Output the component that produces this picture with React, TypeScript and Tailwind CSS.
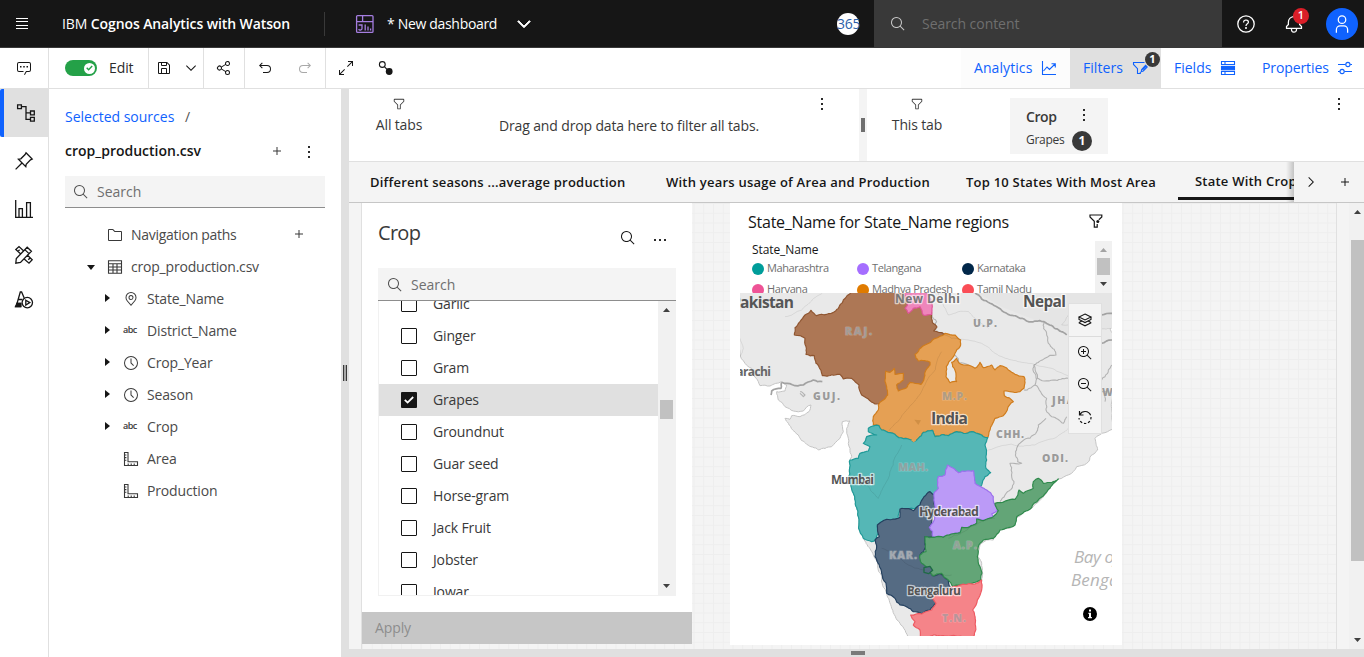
import type { ReactNode } from "react";

type Pt = [number, number];

/* ---------- icons ---------- */

function Glyph({ d, size = 16, className = "", children }: { d?: string; size?: number; className?: string; children?: ReactNode }) {
  return (
    <svg width={size} height={size} viewBox="0 0 32 32" fill="currentColor" className={"shrink-0 " + className}>
      {d ? <path d={d} /> : null}
      {children}
    </svg>
  );
}

const P = {
  search:
    "M29,27.5859l-7.5521-7.5521a11.0177,11.0177,0,1,0-1.4141,1.4141L27.5859,29ZM4,13a9,9,0,1,1,9,9A9.01,9.01,0,0,1,4,13Z",
  chat: "M17.74,30,16,29l4-7h6a2,2,0,0,0,2-2V8a2,2,0,0,0-2-2H6A2,2,0,0,0,4,8V20a2,2,0,0,0,2,2h9v2H6a4,4,0,0,1-4-4V8A4,4,0,0,1,6,4H26a4,4,0,0,1,4,4V20a4,4,0,0,1-4,4H21.16Z",
  save: "M27.71,9.29l-5-5A1,1,0,0,0,22,4H6A2,2,0,0,0,4,6V26a2,2,0,0,0,2,2H26a2,2,0,0,0,2-2V10A1,1,0,0,0,27.71,9.29ZM12,6h8v4H12Zm8,20H12V18h8Zm2,0V18a2,2,0,0,0-2-2H12a2,2,0,0,0-2,2v8H6V6h4v4a2,2,0,0,0,2,2h8a2,2,0,0,0,2-2V6.41l4,4V26Z",
  share:
    "M23,20a5,5,0,0,0-3.89,1.89L11.8,17.32a4.46,4.46,0,0,0,0-2.64l7.31-4.57A5,5,0,1,0,18,7a4.79,4.79,0,0,0,.2,1.32l-7.31,4.57a5,5,0,1,0,0,6.22l7.31,4.57A4.79,4.79,0,0,0,18,25a5,5,0,1,0,5-5ZM23,4a3,3,0,1,1-3,3A3,3,0,0,1,23,4ZM7,19a3,3,0,1,1,3-3A3,3,0,0,1,7,19Zm16,9a3,3,0,1,1,3-3A3,3,0,0,1,23,28Z",
  undo: "M20,10H7.8149l3.5874-3.5859L10,5,4,11,10,17l1.4023-1.4146L7.8179,12H20a6,6,0,0,1,0,12H12v2h8a8,8,0,0,0,0-16Z",
  redo: "M12,10H24.1851L20.5977,6.4141,22,5,28,11,22,17l-1.4023-1.4146L24.1821,12H12a6,6,0,0,0,0,12h8v2H12a8,8,0,0,1,0-16Z",
  expand:
    "M20,2v2h6.586L18,12.582,19.414,14,28,5.414V12h2V2ZM14,19.416,12.592,18,4,26.586V20H2v10h10v-2H5.414Z",
  filter:
    "M18,28H14a2,2,0,0,1-2-2V18.41L4.59,11A2,2,0,0,1,4,9.59V6A2,2,0,0,1,6,4H26a2,2,0,0,1,2,2V9.59A2,2,0,0,1,27.41,11L20,18.41V26A2,2,0,0,1,18,28ZM6,6V9.59l8,8V26h4V17.59l8-8V6Z",
  user: "M16,4a5,5,0,1,1-5,5,5,5,0,0,1,5-5m0-2a7,7,0,1,0,7,7A7,7,0,0,0,16,2ZM26,30H24V25a5,5,0,0,0-5-5H13a5,5,0,0,0-5,5v5H6V25a7,7,0,0,1,7-7h6a7,7,0,0,1,7,7Z",
  bell: "M28.7071,19.293,26,16.5859V13a10.0136,10.0136,0,0,0-9-9.9492V1H15V3.0508A10.0136,10.0136,0,0,0,6,13v3.5859L3.2929,19.293A1,1,0,0,0,3,20v3a1,1,0,0,0,1,1h7v.7768a5.152,5.152,0,0,0,4.5,5.1987A5.0057,5.0057,0,0,0,21,25V24h7a1,1,0,0,0,1-1V20A1,1,0,0,0,28.7071,19.293ZM19,25a3,3,0,0,1-6,0V24h6Zm8-3H5V20.4141L7.707,17.707A1,1,0,0,0,8,17V13a8,8,0,0,1,16,0v4a1,1,0,0,0,.293.707L27,20.4141Z",
  pin: "M16,18a5,5,0,1,1,5-5A5.0057,5.0057,0,0,1,16,18Zm0-8a3,3,0,1,0,3,3A3.0033,3.0033,0,0,0,16,10ZM16,30,7.5645,20.0513c-.0479-.0571-.3482-.4515-.3482-.4515A10.8888,10.8888,0,0,1,5,13a11,11,0,0,1,22,0,10.8844,10.8844,0,0,1-2.2148,6.5973l-.0015.0025s-.3.3944-.3447.4474ZM8.8125,18.395c.001.0007.2334.3082.2866.3744L16,26.9079l6.91-8.15c.0439-.0552.2783-.3649.2788-.3657A8.901,8.901,0,0,0,25,13,9,9,0,1,0,7,13a8.9054,8.9054,0,0,0,1.8125,5.395Z",
  clock: "M16,30A14,14,0,1,1,30,16,14,14,0,0,1,16,30ZM16,4A12,12,0,1,0,28,16,12,12,0,0,0,16,4ZM20.59,22,15,16.41V7h2v8.58l5,5.01Z",
  folder:
    "M11.17,6l3.42,3.41.58.59H28V26H4V6h7.17m0-2H4A2,2,0,0,0,2,6V26a2,2,0,0,0,2,2H28a2,2,0,0,0,2-2V10a2,2,0,0,0-2-2H16L12.59,4.59A2,2,0,0,0,11.17,4Z",
  plus: "M17,15V8H15v7H8v2h7v7h2V17h7V15Z",
  chevDown: "M16,22,6,12l1.4-1.4L16,19.2l8.6-8.6L26,12Z",
  chevRight: "M22,16,12,26l-1.4-1.4L19.2,16,10.6,7.4,12,6Z",
};

function Dots({ vertical = true }: { vertical?: boolean }) {
  return (
    <span className={vertical ? "flex flex-col gap-[3px]" : "flex gap-[3px]"}>
      <i className="block size-[2px] bg-[#2b2b2b]" />
      <i className="block size-[2px] bg-[#2b2b2b]" />
      <i className="block size-[2px] bg-[#2b2b2b]" />
    </span>
  );
}

function Tri({ dir, className = "text-[#404040]" }: { dir: "up" | "down"; className?: string }) {
  return (
    <svg width="7" height="4" viewBox="0 0 7 4" fill="currentColor" className={className}>
      <path d={dir === "up" ? "M0 4L3.5 0L7 4Z" : "M0 0H7L3.5 4Z"} />
    </svg>
  );
}

/* ---------- header ---------- */

function Header() {
  return (
    <header className="flex h-12 shrink-0 items-center border-b border-[#393939] bg-[#161616] text-white">
      <div className="ml-4 flex w-[46px] flex-col gap-[2.4px]">
        <i className="block h-px w-3 bg-white" />
        <i className="block h-px w-3 bg-white" />
        <i className="block h-px w-3 bg-white" />
        <i className="block h-px w-3 bg-white" />
      </div>
      <div className="w-[262px] text-[14px] font-semibold tracking-[-0.1px]">
        <span className="font-normal">IBM</span> Cognos Analytics with Watson
      </div>
      <div className="h-6 w-px bg-[#393939]" />
      <svg width="20" height="20" viewBox="0 0 20 20" fill="none" stroke="#a57ee0" strokeWidth="1.3" className="ml-[30px]">
        <rect x="1.6" y="1.6" width="16.4" height="16.8" rx="1" />
        <path d="M1.6 7.6H18M7.6 1.6V7.6M3.6 11H7v2.6a1.9 1.9 0 0 1-3.4 1.6M10.2 16.6V10.4M13 16.6V12.4M15.6 16.6V14.6" />
      </svg>
      <span className="ml-3 w-[111px] text-[14px] font-medium tracking-[-0.32px]">* New dashboard</span>
      <Glyph d={P.chevDown} size={20} className="ml-4 stroke-white stroke-[1.5]" />
      <div className="ml-[303px] flex size-[22px] items-center rounded-full bg-white text-[14px] text-[#2b5fa8]">
        <span className="tracking-[-0.2px]">365</span>
      </div>
      <div className="ml-[15px] flex h-[47px] w-[348px] items-center bg-[#393939] pl-4">
        <Glyph d={P.search} size={16} className="text-[#c6c6c6]" />
        <span className="ml-4 text-[14px] tracking-[-0.05px] text-[#6f6f6f]">Search content</span>
      </div>
      <svg width="20" height="20" viewBox="0 0 20 20" fill="none" stroke="white" strokeWidth="1.3" className="ml-[14px]">
        <circle cx="10" cy="10" r="8.2" />
        <path d="M7.6 8.4V8A2 2 0 0 1 9.4 6.2H10.4A2 2 0 0 1 12.4 8.2C12.4 10 10 9.6 10 12" />
        <circle cx="10" cy="14" r="0.4" fill="white" />
      </svg>
      <div className="relative ml-[28px] flex size-5 items-center">
        <Glyph d={P.bell} size={20} />
        <span className="absolute -top-[6px] left-[9px] flex size-4 items-center justify-center rounded-full bg-[#da1e28] text-[11px] font-semibold">
          1
        </span>
      </div>
      <div className="ml-[22px] flex size-8 items-center justify-center rounded-full bg-[#0f62fe]">
        <Glyph d={P.user} size={20} />
      </div>
    </header>
  );
}

/* ---------- toolbar ---------- */

function Toolbar() {
  const sep = "h-full border-r border-[#e0e0e0] flex items-center";
  return (
    <div className="flex h-[41px] shrink-0 items-center border-b border-[#e0e0e0] text-[#161616]">
      <div className={sep + " w-[49px] justify-center"}>
        <Glyph d={P.chat}>
          <path d="M8 12h3v3H8zM14.5 12h3v3h-3zM21 12h3v3h-3z" />
        </Glyph>
      </div>
      <div className={sep + " w-[100px] pl-4"}>
        <span className="flex h-4 w-8 items-center justify-end rounded-full bg-[#24a148] pr-[2px]">
          <span className="flex size-[11px] items-center justify-center rounded-full bg-white">
            <svg width="7" height="6" viewBox="0 0 7 6" fill="none" stroke="#24a148" strokeWidth="1.4">
              <path d="M0.7 2.8L2.6 4.7L6.2 0.9" />
            </svg>
          </span>
        </span>
        <span className="ml-[12px] pb-[1px] text-[14px] tracking-[-0.1px] text-[#2b2b2b]">Edit</span>
      </div>
      <div className={sep + " w-[55px] pl-[7px]"}>
        <Glyph d={P.save} />
        <Glyph d={P.chevDown} className="ml-[11px]" />
      </div>
      <div className={sep + " w-[41px] justify-center"}>
        <Glyph d={P.share} />
      </div>
      <div className={sep + " w-[81px] gap-6 pl-[12px]"}>
        <Glyph d={P.undo} />
        <Glyph d={P.redo} className="text-[#a8a8a8]" />
      </div>
      <Glyph d={P.expand} className="ml-[12px]" />
      <svg width="16" height="16" viewBox="0 0 16 16" className="ml-6">
        <circle cx="4.3" cy="4.5" r="2.9" fill="none" stroke="#161616" strokeWidth="1.1" />
        <circle cx="11.2" cy="11.5" r="3.4" fill="#161616" />
        <path d="M6.4 6.6L9 9.4" stroke="#161616" strokeWidth="1.1" />
      </svg>
      <div className="flex-1" />
      <div className="flex h-full w-[109px] items-center bg-[#fcfcfc] pl-[13px] text-[14px] text-[#0f62fe]">
        <span className="w-[67px] pb-[1px] tracking-[0.08px]">Analytics</span>
        <svg width="16" height="16" viewBox="0 0 16 16" fill="none" stroke="currentColor" strokeWidth="1.1">
          <path d="M1.5 1V14.5H15M2.5 11L6 7L8.5 9.5L14 4M10.5 3.7H14.3V7.5" />
        </svg>
      </div>
      <div className="relative flex h-full w-[91px] items-center bg-[#e0e0e0] pl-[13px] text-[14px] text-[#0f62fe]">
        <span className="w-[49px] pb-[1px] tracking-[0.05px]">Filters</span>
        <svg width="16" height="16" viewBox="0 0 16 16" fill="none" stroke="currentColor" strokeWidth="1.1">
          <path d="M12.5 2.5H1.5V4.5L5.5 8.7V13.5H8.3V12" />
          <path d="M9.2 11.6L9.7 9.4L13.6 5.4L15.2 7L11.3 11Z" />
          <path d="M10.4 9.8L14.2 6" strokeWidth="1.6" />
        </svg>
        <span className="absolute left-[75px] top-1 flex size-[15px] items-center justify-center rounded-full bg-[#393939] text-[11px] font-bold text-white">
          1
        </span>
      </div>
      <div className="flex h-full w-[88px] items-center pl-[13px] text-[14px] text-[#0f62fe]">
        <span className="w-[46px] pb-[1px]">Fields</span>
        <svg width="16" height="16" viewBox="0 0 16 16" fill="none" stroke="currentColor" strokeWidth="1.1">
          <path d="M1.5 1.5H14.5V4.5H1.5ZM5 1.5V4.5M1.5 11.5H14.5V14.5H1.5ZM5 11.5V14.5" />
          <rect x="1.5" y="6.4" width="13" height="3.4" fill="currentColor" />
        </svg>
      </div>
      <div className="flex h-full w-[115px] items-center pl-[13px] text-[14px] text-[#0f62fe]">
        <span className="w-[75px] pb-[1px] tracking-[-0.1px]">Properties</span>
        <svg width="16" height="16" viewBox="0 0 16 16" fill="none" stroke="currentColor" strokeWidth="1.1">
          <path d="M1 4.5H8.6M13.2 4.5H15M1 11.5H2.8M7.4 11.5H15" />
          <circle cx="10.9" cy="4.5" r="2.1" />
          <circle cx="5.1" cy="11.5" r="2.1" />
        </svg>
      </div>
    </div>
  );
}

/* ---------- left rail and data panel ---------- */

function Rail() {
  return (
    <nav className="flex w-[49px] shrink-0 flex-col border-r border-[#e0e0e0] text-[#161616]">
      <div className="flex h-12 items-center justify-center rounded-l-[2px] border-l-4 border-[#0f62fe] bg-[#e0e0e0] pr-[2px]">
        <svg width="20" height="20" viewBox="0 0 20 20" fill="none" stroke="currentColor" strokeWidth="1.3" className="ml-[2px]">
          <path d="M1.6 1.8H5.4V5.6H1.6ZM14.5 8H18.3V11.8H14.5ZM14.5 14.4H18.3V18.2H14.5ZM5.4 3.7H10V16.3H14.5M10 9.9H14.5" />
        </svg>
      </div>
      <div className="flex h-12 items-center justify-center">
        <svg width="20" height="20" viewBox="0 0 20 20" fill="none" stroke="currentColor" strokeWidth="1.3">
          <path d="M12 1.8L18.2 8L16.5 8.9L12.2 13.2L11.8 15.6L4.4 8.2L6.8 7.8L11.1 3.5ZM8 12L1.6 18.4" />
        </svg>
      </div>
      <div className="flex h-[47px] items-center justify-center">
        <svg width="20" height="20" viewBox="0 0 20 20" fill="none" stroke="currentColor" strokeWidth="1.3">
          <path d="M1.7 1V18.3H19M5 18V9.6H8.4V18M12.6 18V3.6H16.4V18" />
        </svg>
      </div>
      <div className="flex h-[46px] items-center justify-center">
        <svg width="20" height="20" viewBox="0 0 20 20" fill="none" stroke="currentColor" strokeWidth="1.3">
          <path d="M1.8 18.2L2.3 13.5L13.2 2.2L17.4 6.2L6.5 17.5ZM10.8 4.6L15 8.6M6.8 9L1.8 4.5L5 1.6L10 6.2M4 6.4L5.6 4.8M13 9.8L18.2 14.8L15 18.2L9.6 13.6M14.3 14.8L16 13" />
        </svg>
      </div>
      <div className="flex h-[44px] items-center justify-center">
        <svg width="20" height="20" viewBox="0 0 20 20" fill="none" stroke="currentColor" strokeWidth="1.3">
          <path d="M1 16.5H7M3 13.5L6.3 2H7.6L10.2 8M2.2 13.5H7M4.2 9.5H8.5" />
          <path d="M1.5 16.5L3 13.5H7V16.5Z" fill="currentColor" />
          <circle cx="13.3" cy="12.6" r="5.2" />
          <path d="M11.8 10.2L15.8 12.6L11.8 15Z" />
        </svg>
      </div>
    </nav>
  );
}

type Field = { label: string; kind: "geo" | "abc" | "time" | "measure" };

const fields: Field[] = [
  { label: "State_Name", kind: "geo" },
  { label: "District_Name", kind: "abc" },
  { label: "Crop_Year", kind: "time" },
  { label: "Season", kind: "time" },
  { label: "Crop", kind: "abc" },
  { label: "Area", kind: "measure" },
  { label: "Production", kind: "measure" },
];

function FieldIcon({ kind }: { kind: Field["kind"] }) {
  if (kind === "geo") return <Glyph d={P.pin} />;
  if (kind === "time") return <Glyph d={P.clock} />;
  if (kind === "abc") return <span className="w-4 pb-[2px] text-[9px] font-semibold tracking-[-0.5px]">abc</span>;
  return (
    <svg width="16" height="16" viewBox="0 0 16 16" fill="none" stroke="currentColor" strokeWidth="1.1">
      <path d="M1.5 1.5H5V10.8H14.5V14.5H1.5ZM1.5 4H3.4M1.5 6.6H3.4M1.5 9.2H3.4M5.2 14.3V12.6M8.2 14.3V12.6M11.2 14.3V12.6" />
    </svg>
  );
}

function DataPanel() {
  return (
    <aside className="flex w-[292px] shrink-0 flex-col pl-4 pr-4 text-[14px] text-[#393939]">
      <div className="mt-[17px] flex h-[22px] items-center pb-[1px]">
        <span className="w-[120px] text-[#0f62fe]">Selected sources</span>
        <span className="text-[#525252]">/</span>
      </div>
      <div className="mt-3 flex h-[22px] items-center">
        <span className="w-[204px] pb-[1px] font-semibold text-[#161616]">crop_production.csv</span>
        <Glyph d={P.plus} />
        <span className="ml-[23px] mt-[2px]">
          <Dots />
        </span>
      </div>
      <div className="mt-[14px] flex h-8 items-center border-b border-[#8d8d8d] bg-[#f4f4f4] pl-2">
        <Glyph d={P.search} className="text-[#525252]" />
        <span className="ml-2 text-[#6f6f6f]">Search</span>
      </div>
      <div className="mt-[11px] flex h-8 items-center pl-[42px]">
        <Glyph d={P.folder} />
        <span className="ml-2 w-[160px] pb-[1px] tracking-[-0.28px] text-[#4a4a4a]">Navigation paths</span>
        <Glyph d={P.plus} className="-mt-[2px]" />
      </div>
      <div className="flex h-8 items-center pl-[22px]">
        <svg width="8" height="5" viewBox="0 0 8 5" className="text-[#161616]" fill="currentColor">
          <path d="M0 0H8L4 5Z" />
        </svg>
        <svg width="16" height="16" viewBox="0 0 16 16" fill="none" stroke="currentColor" strokeWidth="1.1" className="ml-[12px]">
          <path d="M1.5 1.8H14.5V14.2H1.5ZM1.5 4.8H14.5M1.5 8H14.5M1.5 11H14.5M6 4.8V14.2M10 4.8V14.2" />
        </svg>
        <span className="ml-2 pb-[1px] tracking-[-0.2px] text-[#4a4a4a]">crop_production.csv</span>
      </div>
      {fields.map((f) => (
        <div key={f.label} className="flex h-8 items-center pl-10">
          <span className="w-[18px]">
            {f.kind !== "measure" && (
              <svg width="5" height="8" viewBox="0 0 5 8" fill="#161616" className="-mt-[2px]">
                <path d="M0 0L5 4L0 8Z" />
              </svg>
            )}
          </span>
          <FieldIcon kind={f.kind} />
          <span className="ml-2 pb-[1px] tracking-[-0.15px] text-[#4a4a4a]">{f.label}</span>
        </div>
      ))}
    </aside>
  );
}

/* ---------- filter dock and tabs ---------- */

function FilterDock() {
  return (
    <div className="flex h-[73px] shrink-0 border-b border-[#e0e0e0] text-[14px] text-[#393939]">
      <div className="flex w-[510px]">
        <div className="flex w-[100px] flex-col items-center pt-2">
          <Glyph d={P.filter} size={14} />
          <span className="mt-[4px] leading-5 tracking-[-0.15px]">All tabs</span>
        </div>
        <span className="ml-[50px] mt-[27px] w-[322px] leading-5 tracking-[-0.14px]">Drag and drop data here to filter all tabs.</span>
        <div className="pt-[9px]">
          <Dots />
        </div>
      </div>
      <div className="flex w-2 justify-center bg-[#f4f4f4] pt-[29px]">
        <i className="block h-[14px] w-1 bg-[#6f6f6f]" />
      </div>
      <div className="flex flex-1">
        <div className="flex w-[100px] flex-col items-center pt-2">
          <Glyph d={P.filter} size={14} />
          <span className="mt-[4px] leading-5 tracking-[-0.15px]">This tab</span>
        </div>
        <div className="ml-[43px] mt-[9px] flex h-14 w-[98px] flex-col bg-[#f4f4f4] pl-4 pt-2">
          <div className="flex h-5 items-center">
            <span className="w-[57px] font-semibold tracking-[-0.4px]">Crop</span>
            <span className="-mt-[3px]">
              <Dots />
            </span>
          </div>
          <div className="flex h-[29px] items-center pt-[1px]">
            <span className="w-[46px] pb-[1px] text-[12px] tracking-[-0.3px]">Grapes</span>
            <span className="flex size-5 items-center justify-center rounded-full bg-[#393939] text-[12px] font-bold text-white">1</span>
          </div>
        </div>
        <div className="ml-[230px] pt-[9px]">
          <Dots />
        </div>
      </div>
    </div>
  );
}

function Tabs() {
  return (
    <div className="flex h-[41px] shrink-0 items-center border-b border-[#c6c6c6] bg-[#f4f4f4] text-[13px] font-semibold tracking-[0.22px] text-[#161616]">
      <div className="relative flex h-full w-[945px] items-center overflow-hidden pl-[21px]">
        <span className="w-[296px] shrink-0 pt-px">Different seasons ...average production</span>
        <span className="w-[300px] shrink-0 pt-px">With years usage of Area and Production</span>
        <span className="w-[212px] shrink-0 pt-px">Top 10 States With Most Area</span>
        <span className="mb-[2px] flex h-[38px] shrink-0 items-center border-b-[3px] border-[#161616] pl-[17px] pt-[5px]">State With Crop</span>
        <div className="absolute right-0 top-0 h-full w-2 bg-gradient-to-r from-transparent to-black/20" />
      </div>
      <div className="flex w-[33px] justify-center">
        <Glyph d={P.chevRight} />
      </div>
      <div className="ml-[10px] flex">
        <Glyph d={P.plus} className="-mt-px" />
      </div>
    </div>
  );
}

/* ---------- crop list widget ---------- */

const crops = ["Garlic", "Ginger", "Gram", "Grapes", "Groundnut", "Guar seed", "Horse-gram", "Jack Fruit", "Jobster", "Jowar"];

function CropWidget() {
  return (
    <section className="flex h-[441px] w-[330px] shrink-0 flex-col bg-white text-[#393939]">
      <div className="flex h-[65px] px-4">
        <h2 className="mt-[17px] w-[242px] text-[20px] leading-[26px] tracking-[-0.7px]">Crop</h2>
        <Glyph d={P.search} className="mt-[27px] text-[#161616]" />
        <span className="ml-[18px] mt-[36px]">
          <Dots vertical={false} />
        </span>
      </div>
      <div className="mx-4 flex h-[33px] shrink-0 items-center border-b border-[#8d8d8d] bg-[#f4f4f4] pl-[9px] pt-px text-[14px]">
        <Glyph d={P.search} className="text-[#525252]" />
        <span className="ml-2 text-[#6f6f6f]">Search</span>
      </div>
      <div className="mx-4 flex h-[295px] shrink-0 border border-t-0 border-[#f1f1f1]">
        <div className="flex flex-1 flex-col overflow-hidden text-[14px]">
          {crops.map((c, i) => (
            <div
              key={c}
              className={
                (c === "Grapes" ? "bg-[#e0e0e0] " : "") + (i === 0 ? "-mt-[13px] " : "") + "flex h-8 shrink-0 items-center pl-[22px]"
              }
            >
              {c === "Grapes" ? (
                <span className="flex size-4 items-center justify-center rounded-[1px] bg-[#161616]">
                  <svg width="10" height="8" viewBox="0 0 10 8" fill="none" stroke="white" strokeWidth="1.8">
                    <path d="M0.8 3.8L3.6 6.6L9.2 1" />
                  </svg>
                </span>
              ) : (
                <span className="size-4 rounded-[1px] border border-[#161616] bg-white" />
              )}
              <span className="ml-4 pb-[1px] tracking-[-0.15px]">{c}</span>
            </div>
          ))}
        </div>
        <div className="flex w-[17px] flex-col items-center bg-[#f1f1f1]">
          <Tri dir="up" className="mt-[7px] text-[#404040]" />
          <i className="mt-[88px] block h-[19px] w-[13px] bg-[#c1c1c1]" />
          <Tri dir="down" className="mt-[165px] text-[#404040]" />
        </div>
      </div>
      <div className="mt-4 flex h-8 items-center bg-[#c6c6c6] pb-px pl-[13px] text-[14px] tracking-[-0.1px] text-[#8d8d8d]">Apply</div>
    </section>
  );
}

/* ---------- map ---------- */

/* Splits each edge into jittered pieces; the jitter depends only on the edge, so shared borders coincide. */
function jitter(a: Pt, b: Pt, k: number): Pt[] {
  const dx = b[0] - a[0];
  const dy = b[1] - a[1];
  const len = Math.hypot(dx, dy);
  if (len < 9) return [b];
  const flip = a[0] > b[0] || (a[0] === b[0] && a[1] > b[1]) ? -1 : 1;
  const s = Math.sin((a[0] + b[0]) * 12.9898 + (a[1] + b[1]) * 78.233) * 43758.5453;
  const r = (s - Math.floor(s) - 0.5) * 2 * k * flip;
  const m: Pt = [(a[0] + b[0]) / 2 - dy * r, (a[1] + b[1]) / 2 + dx * r];
  return [...jitter(a, m, k), ...jitter(m, b, k)];
}

function outline(src: string, close = true, k = 0.11): string {
  const pts = src.split(" ").map((p) => p.split(",").map(Number) as Pt);
  const all: Pt[] = [pts[0]];
  const n = close ? pts.length : pts.length - 1;
  for (let i = 0; i < n; i++) all.push(...jitter(pts[i], pts[(i + 1) % pts.length], k));
  return "M" + all.map((p) => p[0].toFixed(1) + " " + p[1].toFixed(1)).join("L") + (close ? "Z" : "");
}

const land =
  "15,205 30,235 50,250 70,290 75,302 105,303 140,290 155,300 150,318 125,320 130,345 150,365 175,378 205,378 228,360 222,380 195,395 170,392 165,403 150,400 160,415 190,450 215,478 250,495 290,485 315,460 325,440 322,410 345,408 335,430 340,460 345,490 350,515 343,530 355,625 370,695 385,760 405,790 415,810 440,875 455,925 470,970 495,1015 520,1060 715,1060 712,975 730,935 740,885 727,810 735,780 755,765 775,765 790,735 835,725 845,700 890,670 970,582 1025,545 1055,535 1088,495 1080,460 1110,443 1140,430 1140,15 5,15";

const states: { id: string; fill: string; line: string; pts: string }[] = [
  {
    id: "raj",
    fill: "#ad7755",
    line: "#8f5530",
    pts: "350,20 325,45 302,78 245,92 228,76 210,90 195,110 180,128 178,150 210,160 213,208 238,212 243,235 262,272 300,270 315,268 325,282 350,280 362,292 372,300 380,330 400,342 420,357 440,355 490,350 515,330 560,298 580,262 600,230 600,170 630,147 610,142 596,138 606,126 592,112 590,90 580,60 520,20",
  },
  {
    id: "har",
    fill: "#ee86bb",
    line: "#e0559b",
    pts: "508,20 520,50 510,70 520,85 535,70 555,65 565,90 590,88 592,65 575,20",
  },
  {
    id: "mp",
    fill: "#e5a054",
    line: "#cf7c1d",
    pts: "415,420 415,395 430,375 430,360 445,345 458,330 455,305 450,285 452,258 465,262 478,250 480,268 505,265 505,285 485,300 490,318 515,308 525,292 558,298 570,262 585,240 585,232 550,228 540,208 570,180 630,145 660,150 677,165 675,185 660,205 653,218 634,245 633,275 645,293 665,290 663,270 653,245 650,232 665,220 673,235 700,240 708,243 720,250 735,232 745,248 770,240 780,255 795,242 820,255 840,268 867,275 867,310 855,320 807,318 808,332 835,350 817,375 805,392 780,400 765,435 758,458 735,448 710,440 685,445 665,440 640,452 600,455 593,436 565,442 550,460 535,470 520,462 465,443 440,435 432,422",
  },
  {
    id: "mah",
    fill: "#55b7b6",
    line: "#1f9a98",
    pts: "400,430 432,422 440,435 465,443 520,462 535,470 550,460 565,442 593,436 600,455 640,452 665,440 685,445 710,440 735,448 758,458 750,480 755,525 753,550 767,563 750,575 740,600 720,620 590,690 560,655 540,670 497,675 490,700 440,710 427,725 430,745 422,765 410,770 385,760 370,695 355,625 343,530 345,525 370,520 375,505 400,498 405,485 385,475 395,455 425,450 400,440",
  },
  {
    id: "kar",
    fill: "#556b83",
    line: "#24405f",
    pts: "585,620 597,630 600,665 590,715 585,730 593,740 593,757 570,755 573,785 555,810 560,830 580,850 595,873 615,865 640,885 645,905 595,935 603,955 585,975 560,987 535,980 495,960 480,940 455,925 440,865 420,815 425,785 420,765 433,755 427,720 455,703 495,697 495,672 535,677 555,660 567,635",
  },
  {
    id: "tel",
    fill: "#bb9af7",
    line: "#9b70ec",
    pts: "637,540 655,550 670,563 695,558 715,557 720,595 755,615 775,635 777,655 790,675 770,687 775,695 740,705 725,700 725,715 680,727 675,743 625,755 593,755 593,740 583,727 595,710 600,665 597,625 610,610 610,575 630,570",
  },
  {
    id: "ap",
    fill: "#63a577",
    line: "#2f8a4c",
    pts: "570,755 625,757 675,743 680,727 725,715 725,702 745,707 775,695 790,677 780,655 840,643 852,615 865,625 895,610 895,590 910,580 925,595 950,593 970,582 945,610 910,645 890,668 845,695 840,720 795,735 775,760 745,765 730,785 727,815 735,845 738,885 715,893 695,900 655,905 640,885 620,865 595,873 580,850 560,835 555,810 573,800",
  },
  {
    id: "tn",
    fill: "#f58489",
    line: "#ee5a62",
    pts: "740,885 740,915 713,975 715,1060 558,1060 555,1035 535,1020 540,1010 527,990 560,987 590,975 603,955 593,940 655,905 695,898 720,897",
  },
];

const thin = [
  "590,90 605,110 600,130",
  "927,110 935,150 945,180 963,210 930,220 897,240 903,280 955,285 1000,280",
  "897,240 900,300 867,315",
  "900,300 935,340 933,375 950,395 985,415 995,395",
  "933,400 910,420 905,440 885,460 845,490 848,530 860,535 825,535 837,590 810,630 795,650",
  "660,210 672,235 700,240",
  "1100,285 1110,275 1120,255 1131,240",
  "1098,320 1115,320 1110,350",
  "195,320 210,330 205,335 195,325",
];
const faint = [
  "600,130 650,160 700,165 740,175 780,205 830,225 880,235 950,250 1010,280",
  "262,24 200,75 150,95",
  "610,24 640,90 700,80 760,130",
  "15,215 25,190 15,160",
  "760,495 900,480 1000,430 1080,400",
  "1000,90 980,120 1060,140 1131,130",
  "460,440 520,370 570,300 620,200",
  "395,600 430,640 500,480",
  "440,790 520,840 600,870 650,870",
  "640,760 780,700",
];
const thick = [
  "720,24 740,42 790,68 815,85 855,100 900,108 927,110 995,150",
  "140,292 205,300 235,285 262,290",
  "140,292 138,310 110,318 108,330",
  "1100,90 1131,85",
  "1098,175 1131,165",
];

function Label({ x, y, w, size, children, tone = "#545454", spaced = false }: { x: number; y: number; w: number; size: number; children: string; tone?: string; spaced?: boolean }) {
  return (
    <text
      x={x}
      y={y}
      textLength={w}
      fontSize={size}
      fontWeight={spaced ? 800 : 700}
      fill={tone}
      stroke="#ffffff"
      strokeOpacity={spaced ? 0.25 : 0.65}
      strokeWidth={spaced ? 1.2 : 2.6}
      strokeLinejoin="round"
      paintOrder="stroke"
    >
      {children}
    </text>
  );
}

function IndiaMap() {
  return (
    <svg width="372" height="343" viewBox="740 293 372 343" className="block">
      <g transform="translate(735 285) scale(0.33333)" strokeLinejoin="round" fill="none">
        <path d={outline(land)} fill="#e9e9e9" stroke="#c4c4c4" strokeWidth="3" />
        <path d="M730 24L800 66L900 105L1000 150L1131 130V24Z" fill="#e5e5e5" />
        {thin.map((p) => (
          <path key={p} d={outline(p, false, 0.16)} stroke="#b2b2b2" strokeWidth="3.2" />
        ))}
        {thick.map((p) => (
          <path key={p} d={outline(p, false)} stroke="#a2a2a2" strokeWidth="5" />
        ))}
        {states.map((s) => (
          <path key={s.id} d={outline(s.pts)} fill={s.fill} stroke={s.line} strokeWidth="3.5" />
        ))}
        {faint.map((p) => (
          <path key={p} d={outline(p, false, 0.08)} stroke="#000000" strokeOpacity="0.08" strokeWidth="3" />
        ))}
        <path d="M567 848l18-4 8 12-12 10-14-4z" fill="#556b83" stroke="#1f6b45" strokeWidth="4" />
        <path d="M538 404l20 2-8 14z" fill="#d08f45" />
        <path d="M528 466l8-4 8 4-8 6z" fill="#e5a054" />
      </g>
      <text x="794" y="308" textAnchor="end" fontSize="15.5" fontWeight="700" fill="#565656" textLength="63">
        Pakistan
      </text>
      <text x="771" y="376" textAnchor="end" fontSize="12" fontWeight="700" fill="#666" textLength="42">
        Karachi
      </text>
      <Label x={1023} y={307} w={43} size={15.5}>Nepal</Label>
      <Label x={895} y={303} w={65} size={12} tone="#767676">New Delhi</Label>
      <Label x={931} y={424} w={37} size={16}>India</Label>
      <Label x={831} y={484} w={43} size={12}>Mumbai</Label>
      <Label x={919} y={516} w={60} size={12.5}>Hyderabad</Label>
      <Label x={907} y={595} w={54} size={12}>Bengaluru</Label>
      <Label x={845} y={335} w={27} size={10.5} tone="#a39c98" spaced>RAJ.</Label>
      <Label x={813} y={400} w={27} size={10.5} tone="#9a9a9a" spaced>GUJ.</Label>
      <Label x={973} y={327} w={24} size={10.5} tone="#9a9a9a" spaced>U.P.</Label>
      <Label x={942} y={400} w={25} size={10.5} tone="#b09c84" spaced>M.P.</Label>
      <Label x={996} y={438} w={28} size={10.5} tone="#9a9a9a" spaced>CHH.</Label>
      <Label x={1052} y={404} w={27} size={10.5} tone="#9a9a9a" spaced>JHA.</Label>
      <Label x={1102} y={396} w={28} size={10.5} tone="#9a9a9a" spaced>W.B.</Label>
      <Label x={1042} y={462} w={26} size={10.5} tone="#9a9a9a" spaced>ODI.</Label>
      <Label x={898} y={471} w={30} size={10.5} tone="#8fa3a2" spaced>MAH.</Label>
      <Label x={889} y={559} w={28} size={10.5} tone="#a3a9b0" spaced>KAR.</Label>
      <Label x={953} y={549} w={24} size={10.5} tone="#94a399" spaced>A.P.</Label>
      <Label x={942} y={622} w={24} size={10.5} tone="#b8959a" spaced>T.N.</Label>
      <g fontSize="17" fontStyle="italic" fill="#b5b5b5">
        <text x="1074" y="563" textLength="45">Bay of</text>
        <text x="1071" y="586" textLength="52">Bengal</text>
      </g>
    </svg>
  );
}

const legend = [
  { name: "Maharashtra", dot: "bg-[#009d9a]" },
  { name: "Telangana", dot: "bg-[#a56eff]" },
  { name: "Karnataka", dot: "bg-[#012749]" },
  { name: "Haryana", dot: "bg-[#ee5396]" },
  { name: "Madhya Pradesh", dot: "bg-[#e07b00]" },
  { name: "Tamil Nadu", dot: "bg-[#fa4d56]" },
];

function MapControls() {
  const cell = "flex h-[32px] items-center justify-center";
  return (
    <div className="absolute left-[329px] top-[11px] flex w-8 flex-col bg-[#f4f4f4] text-[#161616] shadow-[0_0_0_1px_#e0e0e0]">
      <div className="flex h-[33px] items-center justify-center border-b border-[#dcdcdc]">
        <svg width="16" height="16" viewBox="0 0 16 16" fill="none" stroke="currentColor" strokeWidth="1.1">
          <path d="M8 2L14 5L8 8L2 5ZM1.8 10.8L8 13.8L14.2 10.8M2 5V7.4L8 10.6L14 7.4V5M4.4 9.2L1.8 10.8M11.6 9.2L14.2 10.8" />
        </svg>
      </div>
      <div className={cell}>
        <Glyph d={P.search}>
          <path d="M12 8h2v10h-2zM8 12h10v2H8z" />
        </Glyph>
      </div>
      <div className={cell}>
        <Glyph d={P.search}>
          <path d="M8 12h10v2H8z" />
        </Glyph>
      </div>
      <div className={cell}>
        <svg width="16" height="16" viewBox="0 0 16 16" fill="none" stroke="currentColor" strokeWidth="1.2">
          <path d="M2.5 2V6H6.5M2.8 5.6A6 6 0 0 1 13.6 6.2" />
          <path d="M14 8A6 6 0 0 1 2 9" strokeDasharray="2.4 1.8" />
        </svg>
      </div>
    </div>
  );
}

function MapWidget() {
  return (
    <section className="flex h-[442px] w-[392px] shrink-0 flex-col bg-white">
      <div className="flex h-[38px] items-center pl-[18px]">
        <h2 className="w-[341px] pb-px text-[16px] tracking-[-0.24px] text-[#161616]">State_Name for State_Name regions</h2>
        <svg width="14" height="15" viewBox="0 0 14 15" fill="none" stroke="#161616" strokeWidth="1.2" className="-mt-[2px]">
          <path d="M9.8 5.8L12.8 3V1H1V3L5.3 7.3V13.2H8.2V10" />
          <circle cx="8.8" cy="7.6" r="1.5" fill="#161616" stroke="none" />
        </svg>
      </div>
      <div className="ml-[10px] flex h-[52px] w-[372px] shrink-0 overflow-hidden">
        <div className="w-[355px] shrink-0 pl-3">
          <div className="h-[17px] text-[12px] leading-[17px] tracking-[-0.1px] text-[#161616]">State_Name</div>
          <div className="grid grid-cols-[105px_105px_105px] text-[11px] tracking-[-0.4px] text-[#6f6f6f]">
            {legend.map((l) => (
              <div key={l.name} className="flex h-[21px] items-center">
                <i className={"block size-3 rounded-full " + l.dot} />
                <span className="ml-[3px]">{l.name}</span>
              </div>
            ))}
          </div>
        </div>
        <div className="flex w-[17px] flex-col items-center bg-[#f1f1f1]">
          <Tri dir="up" className="mt-[7px] text-[#a3a3a3]" />
          <i className="mt-[6px] block h-[17px] w-[13px] bg-[#c1c1c1]" />
          <Tri dir="down" className="mt-[7px] text-[#404040]" />
        </div>
      </div>
      <div className="relative ml-[10px] h-[343px] w-[372px] overflow-hidden">
        <IndiaMap />
        <MapControls />
        <svg width="14" height="14" viewBox="0 0 14 14" className="absolute left-[343px] top-[314px]">
          <circle cx="7" cy="7" r="7" />
          <path d="M6 2.6h2v1.8H6zM5.4 5.8H8v4.2h.9v1.3H5.1V10H6V7h-.6z" fill="white" />
        </svg>
      </div>
    </section>
  );
}

/* ---------- canvas ---------- */

function Canvas() {
  return (
    <div className="flex h-[446px] shrink-0 bg-[#f4f4f4]">
      <div className="w-3" />
      <div className="flex w-[976px] items-start gap-[38px] border-x border-[#e0e0e0] bg-[linear-gradient(to_right,#eeeeee_1px,transparent_1px),linear-gradient(to_bottom,#eeeeee_1px,transparent_1px)] bg-[size:9.75px_9.75px]">
        <CropWidget />
        <MapWidget />
      </div>
      <div className="w-3" />
      <div className="flex w-[15px] flex-col items-center bg-[#f1f1f1]">
        <Tri dir="up" className="ml-px mt-[7px] text-[#404040]" />
        <i className="ml-[2px] mt-[26px] block h-[321px] w-[13px] bg-[#c1c1c1]" />
        <Tri dir="down" className="ml-px mt-[77px] text-[#404040]" />
      </div>
    </div>
  );
}

export default function App() {
  return (
    <div className="flex h-[657px] w-[1364px] flex-col overflow-hidden whitespace-nowrap bg-white font-['Open_Sans',sans-serif]">
      <Header />
      <Toolbar />
      <div className="flex min-h-0 flex-1">
        <Rail />
        <DataPanel />
        <div className="flex w-2 shrink-0 items-center justify-center bg-[#e0e0e0]">
          <i className="block h-4 w-1 border-x border-[#393939] bg-[#a8a8a8]" />
        </div>
        <main className="flex min-w-0 flex-1 flex-col">
          <FilterDock />
          <Tabs />
          <Canvas />
          <div className="flex h-2 shrink-0 items-center justify-center bg-[#e0e0e0]">
            <i className="ml-[3px] block h-1 w-[14px] bg-[#7a7a7a]" />
          </div>
        </main>
      </div>
    </div>
  );
}
